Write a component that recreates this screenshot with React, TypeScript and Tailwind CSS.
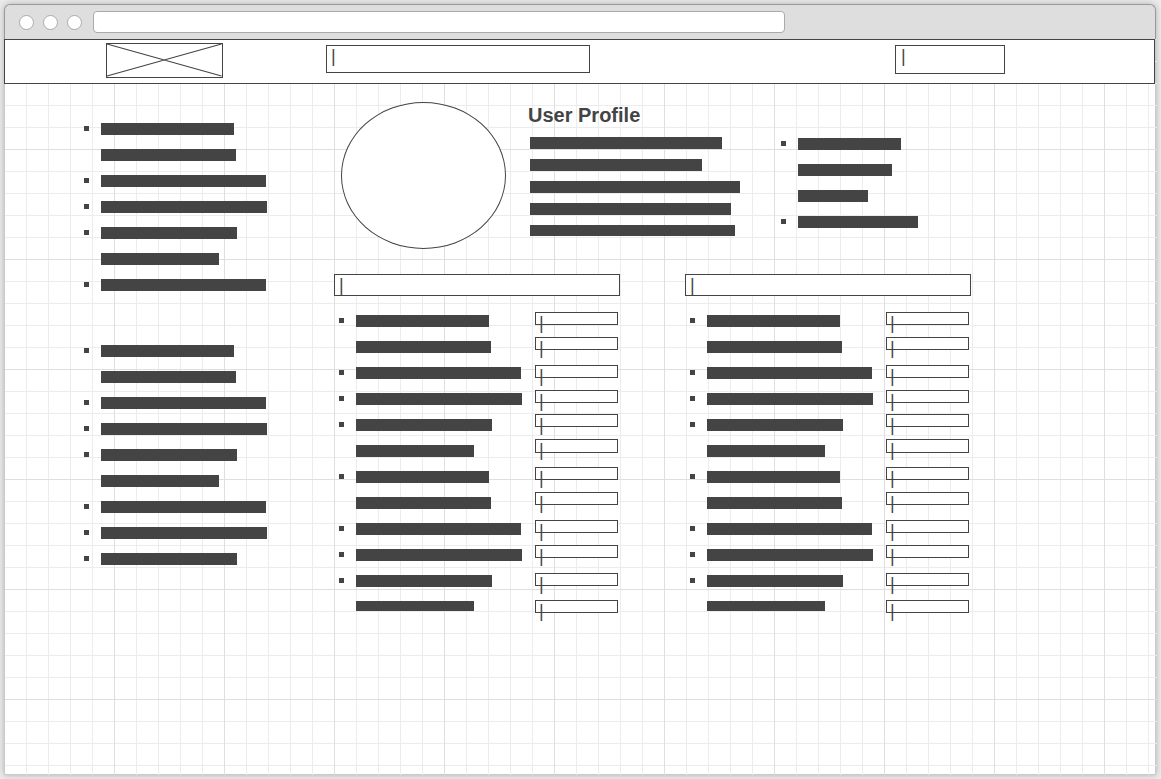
import React from "react";

type Row = { width: string; bullet?: boolean; height?: string };

const opening: Row[] = [
  { width: "w-[133px]", bullet: true },
  { width: "w-[135px]" },
  { width: "w-[165px]", bullet: true },
  { width: "w-[166px]", bullet: true },
  { width: "w-[136px]", bullet: true },
  { width: "w-[118px]" },
];

const firstMenu: Row[] = [...opening, { width: "w-[165px]", bullet: true }];

const secondMenu: Row[] = [
  ...opening,
  { width: "w-[165px]", bullet: true },
  { width: "w-[166px]", bullet: true },
  { width: "w-[136px]", bullet: true },
];

const details: Row[] = [
  ...opening,
  ...opening.slice(0, 5),
  { width: "w-[118px]", height: "h-[10px]" },
];

const links: Row[] = [
  { width: "w-[103px]", bullet: true },
  { width: "w-[94px]" },
  { width: "w-[70px]" },
  { width: "w-[120px]", bullet: true },
];

const bioLines: Row[] = [
  { width: "w-[192px]" },
  { width: "w-[172px]" },
  { width: "w-[210px]" },
  { width: "w-[201px]" },
  { width: "w-[205px]", height: "h-[11px]" },
];

const fieldSpacing = [
  "h-[13px] mb-3",
  "h-[13px] mb-[15px]",
  "h-[13px] mb-3",
  "h-[13px] mb-[11px]",
  "h-[13px] mb-3",
  "h-[14px] mb-[14px]",
  "h-[13px] mb-3",
  "h-[13px] mb-[15px]",
  "h-[13px] mb-3",
  "h-[13px] mb-[15px]",
  "h-[13px] mb-[14px]",
  "h-[13px]",
];

function Bar({ row }: { row: Row }) {
  return <span className={`block bg-[#444] ${row.height ?? "h-3"} ${row.width}`} />;
}

function BarList({ rows, className = "" }: { rows: Row[]; className?: string }) {
  return (
    <ul className={className}>
      {rows.map((row, i) => (
        <li key={i} className="flex h-[26px] items-start gap-3 pt-[7px]">
          <span className={`mt-[3px] size-[5px] ${row.bullet ? "bg-[#444]" : ""}`} />
          <Bar row={row} />
        </li>
      ))}
    </ul>
  );
}

function Field({ label, className }: { label: string; className: string }) {
  return (
    <div className={`border border-[#444] bg-white ${className}`}>
      <input
        type="text"
        aria-label={label}
        defaultValue="|"
        className="block h-5 w-full bg-transparent text-[18px] leading-5 text-[#444] outline-none"
      />
    </div>
  );
}

function Panel({ name }: { name: string }) {
  return (
    <section className="w-[286px]">
      <Field label={`${name} title`} className="h-[22px] pl-1" />
      <div className="flex justify-between pr-[2px] pl-[5px]">
        <BarList rows={details} className="mt-3" />
        <div className="mt-4 w-[83px]">
          {fieldSpacing.map((spacing, i) => (
            <Field key={i} label={`${name} value ${i + 1}`} className={`pl-[3px] ${spacing}`} />
          ))}
        </div>
      </div>
    </section>
  );
}

export default function App() {
  return (
    <div className="flex min-h-screen flex-col bg-[#ebebeb] pt-1 pr-[5px] pb-1 pl-1 font-['Liberation_Sans',Arial,sans-serif] text-[#444]">
      <div className="flex flex-1 flex-col rounded-t-md shadow-[0_0_6px_rgba(0,0,0,0.25)]">
        <div className="flex h-[35px] items-start rounded-t-md border border-b-0 border-[#999] bg-[#dedede] pt-[6px] pl-[14px]">
          <div className="mt-1 flex gap-[9px]">
            <span className="size-[15px] rounded-full border border-[#aaa] bg-white" />
            <span className="size-[15px] rounded-full border border-[#aaa] bg-white" />
            <span className="size-[15px] rounded-full border border-[#aaa] bg-white" />
          </div>
          <input
            type="text"
            aria-label="Address"
            className="ml-[11px] h-[22px] w-[692px] rounded border border-[#aaa] bg-white px-2 text-sm outline-none"
          />
        </div>
        <div className="flex flex-1 flex-col border-x border-b border-[#c9c9c9] bg-white">
          <div className="-mr-[2px] -mb-px flex flex-1 flex-col bg-[linear-gradient(to_right,#dfdfdf_1px,transparent_1px),linear-gradient(to_bottom,#dfdfdf_1px,transparent_1px),linear-gradient(to_right,#ececec_1px,transparent_1px),linear-gradient(to_bottom,#ececec_1px,transparent_1px)] bg-[size:110px_110px,110px_110px,22px_22px,22px_22px] bg-[position:-1px_0]">
            <header className="mr-[2px] -ml-px flex h-[45px] items-start border border-[#444] bg-white pt-[3px] pl-[101px]">
              <svg viewBox="0 0 117 35" className="h-[35px] w-[117px]" fill="none" stroke="#444" role="img" aria-label="Logo">
                <rect x="0.5" y="0.5" width="116" height="34" />
                <path d="M1 1L115.5 33M115.5 1L1 33" strokeWidth="1.1" />
              </svg>
              <Field label="Search" className="mt-[2px] ml-[103px] h-7 w-[264px] pl-1" />
              <Field label="Account" className="mt-[2px] ml-[305px] h-[29px] w-[110px] pl-[5px]" />
            </header>
            <div className="flex pl-[79px]">
              <aside className="w-[250px] pt-8">
                <BarList rows={firstMenu} />
                <BarList rows={secondMenu} className="mt-10" />
              </aside>
              <main className="pt-[18px]">
                <div className="flex items-start pl-[7px]">
                  <div className="mb-[25px] h-[147px] w-[165px] rounded-[50%] border border-[#444] bg-white" />
                  <div className="ml-[22px] w-[253px] pt-px">
                    <h1 className="text-xl leading-6 font-bold">User Profile</h1>
                    <div className="mt-[10px] flex flex-col pl-[2px]">
                      {bioLines.map((row, i) => (
                        <div key={i} className="h-[22px]">
                          <Bar row={row} />
                        </div>
                      ))}
                    </div>
                  </div>
                  <BarList rows={links} className="mt-[29px]" />
                </div>
                <div className="flex gap-[65px]">
                  <Panel name="Left panel" />
                  <Panel name="Right panel" />
                </div>
              </main>
            </div>
          </div>
        </div>
      </div>
    </div>
  );
}
